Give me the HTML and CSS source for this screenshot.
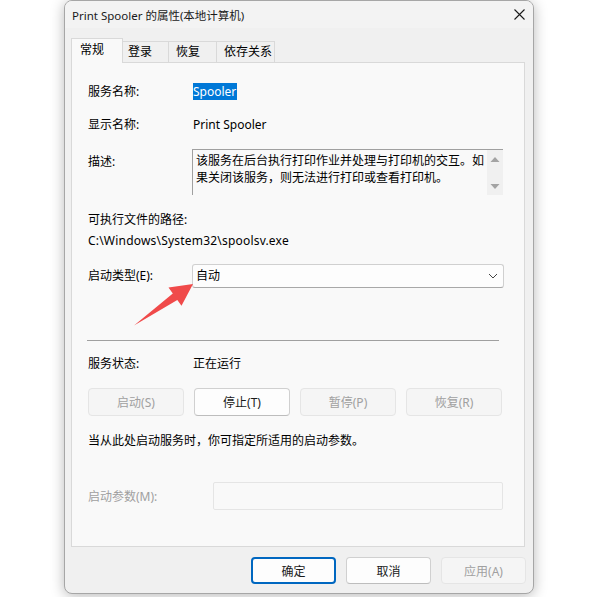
FILE: index.html
```html
<!DOCTYPE html>
<html>
<head>
<meta charset="utf-8">
<link rel="stylesheet" href="styles.css">
</head>
<body>
<div class="window">
  <div class="titlebar">
    <span class="title">Print Spooler 的属性(本地计算机)</span>
    <svg class="close" width="11" height="11" viewBox="0 0 11 11"><path d="M0.5 0.5 L10.5 10.5 M10.5 0.5 L0.5 10.5" stroke="#1a1a1a" stroke-width="1.1" fill="none"/></svg>
  </div>
  <div class="client">
    <div class="tabs">
      <div class="tab active">常规</div>
      <div class="tab t2">登录</div>
      <div class="tab t3">恢复</div>
      <div class="tab t4">依存关系</div>
    </div>
    <div class="panel">
      <div class="row r-name"><span class="label">服务名称:</span><span class="value"><span class="sel">Spooler</span></span></div>
      <div class="row r-display"><span class="label">显示名称:</span><span class="value">Print Spooler</span></div>
      <div class="row r-desc">
        <span class="label desc-label">描述:</span>
        <div class="descbox">
          <div class="desctext">该服务在后台执行打印作业并处理与打印机的交互。如<br>果关闭该服务，则无法进行打印或查看打印机。</div>
          <div class="scrollbar">
            <svg width="16" height="46" viewBox="0 0 16 46"><path d="M3.5 13 L12.5 13 L8 8 Z" fill="#a3a3a3"/><path d="M3.5 35 L12.5 35 L8 40 Z" fill="#a3a3a3"/></svg>
          </div>
        </div>
      </div>
      <div class="row r-pathlabel">可执行文件的路径:</div>
      <div class="row r-path">C:\Windows\System32\spoolsv.exe</div>
      <div class="row r-type">
        <span class="label">启动类型(E):</span>
        <div class="combo"><span>自动</span>
          <svg width="10" height="6" viewBox="0 0 10 6"><path d="M1 1 L5 5 L9 1" stroke="#444" stroke-width="1" fill="none"/></svg>
        </div>
      </div>
      <div class="sep"></div>
      <div class="row r-status"><span class="label">服务状态:</span><span class="value">正在运行</span></div>
      <div class="btnrow">
        <div class="btn disabled">启动(S)</div>
        <div class="btn">停止(T)</div>
        <div class="btn disabled">暂停(P)</div>
        <div class="btn disabled">恢复(R)</div>
      </div>
      <div class="row hint">当从此处启动服务时，你可指定所适用的启动参数。</div>
      <div class="row r-param">
        <span class="label plabel">启动参数(M):</span>
        <div class="paraminput"></div>
      </div>
    </div>
    <div class="footer">
      <div class="btn fbtn default">确定</div>
      <div class="btn fbtn">取消</div>
      <div class="btn fbtn disabled">应用(A)</div>
    </div>
  </div>
</div>
<svg class="arrow" width="600" height="597" viewBox="0 0 600 597">
  <polygon points="193,284 168.5,287.5 172.8,293.6 134,325.5 177.3,300 181.5,305.8" fill="#f04a4a"/>
</svg>
</body>
</html>
```

FILE: styles.css
```css
html, body {
  margin: 0;
  padding: 0;
  background: #ffffff;
  width: 600px;
  height: 597px;
  overflow: hidden;
}
body {
  position: relative;
  font-family: "Segoe UI", "Noto Sans", "Noto Sans CJK SC", sans-serif;
  font-size: 12px;
  color: #000;
}
.window {
  margin-left: 64px;
  width: 470px;
  height: 594px;
  box-sizing: border-box;
  border: 1px solid #a6a6a6;
  border-radius: 8px;
  overflow: hidden;
  background: #f0f0f0;
  box-shadow: 0 2px 14px rgba(0, 0, 0, 0.28);
}
.titlebar {
  height: 27px;
  background: #f3f3f3;
  display: flex;
  align-items: center;
  justify-content: space-between;
  padding: 0 8px 0 7px;
}
.title {
  font-size: 11.5px;
  color: #1a1a1a;
}
.close { display: block; }
.client {
  padding: 10px 8px 0 6px;
}
.tabs {
  display: flex;
  align-items: flex-end;
  height: 24px;
  position: relative;
  z-index: 1;
}
.tab {
  box-sizing: border-box;
  height: 21px;
  line-height: 20px;
  border: 1px solid #d9d9d9;
  border-bottom: none;
  background: #f0f0f0;
  padding-left: 6px;
  margin-left: -1px;
  white-space: nowrap;
}
.tab.active {
  width: 52px;
  height: 25px;
  line-height: 22px;
  margin-left: 0;
  margin-bottom: -1px;
  background: #f9f9f9;
  padding-left: 8px;
}
.t2 { width: 47px; padding-left: 5px; }
.t3 { width: 49px; padding-left: 7px; }
.t4 { width: 59px; padding-left: 7px; }
.panel {
  height: 485px;
  box-sizing: border-box;
  border: 1px solid #d9d9d9;
  background: #f9f9f9;
  padding: 0 20px 0 16px;
}
.row {
  display: flex;
  line-height: 17px;
  white-space: nowrap;
}
.label {
  width: 105px;
  flex: none;
}
.sel {
  background: #0078d7;
  color: #fff;
  display: inline-block;
  padding: 0 1px 0 0;
}
.r-name { margin-top: 20px; }
.r-display { margin-top: 16px; }
.r-desc { margin-top: 16px; align-items: flex-start; }
.desc-label { padding-top: 4px; }
.descbox {
  margin-left: -1px;
  width: 311px;
  height: 46px;
  box-sizing: border-box;
  border-top: 1px solid #a0a0a0;
  border-left: 1px solid #a0a0a0;
  background: #f9f9f9;
  display: flex;
}
.desctext {
  flex: 1;
  padding: 2px 0 0 3px;
  line-height: 17px;
}
.scrollbar {
  width: 16px;
  background: #f0f0f0;
}
.scrollbar svg { display: block; margin-top: -1px; }
.r-pathlabel { margin-top: 16px; }
.r-path { margin-top: 4px; letter-spacing: 0.2px; }
.r-type { margin-top: 15px; line-height: 24px; }
.combo {
  margin-left: -1px;
  width: 312px;
  height: 24px;
  box-sizing: border-box;
  border: 1px solid #d0d0d0;
  border-bottom-color: #a8a8a8;
  border-radius: 3px;
  background: #fdfdfd;
  display: flex;
  align-items: center;
  justify-content: space-between;
  padding: 0 5px 0 3px;
  line-height: 22px;
}
.combo svg { display: block; }
.sep {
  margin-top: 52px;
  margin-left: -1px;
  width: 412px;
  height: 1px;
  background: #a0a0a0;
}
.r-status { margin-top: 14px; }
.btnrow {
  margin-top: 16px;
  display: grid;
  grid-template-columns: repeat(4, 96px);
  column-gap: 10px;
}
.btn {
  box-sizing: border-box;
  height: 28px;
  border: 1px solid #d0d0d0;
  border-bottom-color: #bdbdbd;
  border-radius: 4px;
  background: #fdfdfd;
  display: flex;
  align-items: center;
  justify-content: center;
  color: #1a1a1a;
}
.btn.disabled {
  background: #f5f5f5;
  border-color: #e5e5e5;
  color: #a0a0a0;
}
.hint { margin-top: 16px; }
.r-param { margin-top: 33px; align-items: center; }
.plabel { width: 125px; color: #a0a0a0; }
.paraminput {
  width: 290px;
  height: 28px;
  box-sizing: border-box;
  border: 1px solid #e5e5e5;
  border-radius: 2px;
  background: #f9f9f9;
}
.footer {
  margin-top: 10px;
  display: flex;
  justify-content: flex-end;
  gap: 10px;
  margin-right: -1px;
}
.fbtn {
  width: 85px;
  height: 27px;
}
.fbtn.default {
  border: 2px solid #0067c0;
  background: #fdfdfd;
}
.arrow {
  position: absolute;
  left: 0;
  top: 0;
  pointer-events: none;
}
```
